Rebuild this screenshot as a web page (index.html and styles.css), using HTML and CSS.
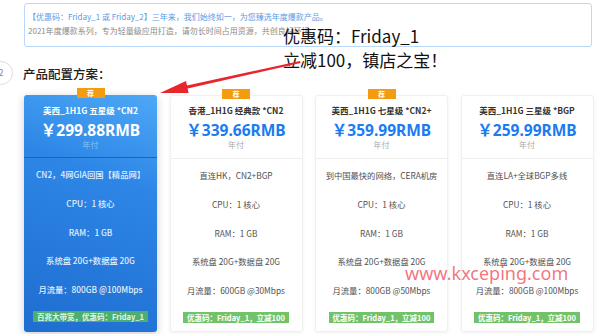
FILE: index.html
```html
<!DOCTYPE html>
<html lang="zh-CN">
<head>
    <meta charset="UTF-8">
    <meta name="viewport" content="width=device-width, initial-scale=1.0">
    <title>产品配置方案</title>
    <link rel="stylesheet" href="styles.css">
</head>
<body>
    <div class="page">
        <!-- Notice -->
        <div class="notice">
            <p class="notice-main">【优惠码：Friday_1 或 Friday_2】三年来，我们始终如一，为您臻选年度爆款产品。</p>
            <p class="notice-sub">2021年度爆款系列，专为轻量级应用打造，请勿长时间占用资源，共创良好环境。</p>
        </div>

        <!-- Step title -->
        <div class="step">
            <span class="step-num">2</span>
            <h2>产品配置方案：</h2>
        </div>

        <!-- Plans -->
        <div class="plans">
            <div class="plan featured">
                <span class="badge">荐</span>
                <div class="plan-head">
                    <h3>美西_1H1G 五星级 *CN2</h3>
                    <div class="price">￥299.88RMB</div>
                    <div class="period">年付</div>
                </div>
                <ul class="plan-body">
                    <li>CN2，4网GIA回国【精品网】</li>
                    <li>CPU：1 核心</li>
                    <li>RAM：1 GB</li>
                    <li>系统盘 20G+数据盘 20G</li>
                    <li>月流量：800GB @100Mbps</li>
                </ul>
                <div class="promo"><span>百兆大带宽，优惠码：Friday_1</span></div>
            </div>

            <div class="plan">
                <span class="badge">荐</span>
                <div class="plan-head">
                    <h3>香港_1H1G 经典款 *CN2</h3>
                    <div class="price">￥339.66RMB</div>
                    <div class="period">年付</div>
                </div>
                <ul class="plan-body">
                    <li>直连HK，CN2+BGP</li>
                    <li>CPU：1 核心</li>
                    <li>RAM：1 GB</li>
                    <li>系统盘 20G+数据盘 20G</li>
                    <li>月流量：600GB @30Mbps</li>
                </ul>
                <div class="promo"><span>优惠码：Friday_1，立减100</span></div>
            </div>

            <div class="plan">
                <span class="badge">荐</span>
                <div class="plan-head">
                    <h3>美西_1H1G 七星级 *CN2+</h3>
                    <div class="price">￥359.99RMB</div>
                    <div class="period">年付</div>
                </div>
                <ul class="plan-body">
                    <li>到中国最快的网络，CERA机房</li>
                    <li>CPU：1 核心</li>
                    <li>RAM：1 GB</li>
                    <li>系统盘 20G+数据盘 20G</li>
                    <li>月流量：800GB @50Mbps</li>
                </ul>
                <div class="promo"><span>优惠码：Friday_1，立减100</span></div>
            </div>

            <div class="plan">
                <div class="plan-head">
                    <h3>美西_1H1G 三星级 *BGP</h3>
                    <div class="price">￥259.99RMB</div>
                    <div class="period">年付</div>
                </div>
                <ul class="plan-body">
                    <li>直连LA+全球BGP多线</li>
                    <li>CPU：1 核心</li>
                    <li>RAM：1 GB</li>
                    <li>系统盘 20G+数据盘 20G</li>
                    <li>月流量：800GB @100Mbps</li>
                </ul>
                <div class="promo"><span>优惠码：Friday_1，立减100</span></div>
            </div>
        </div>

        <!-- Annotation drawn over the screenshot -->
        <div class="callout">优惠码：Friday_1<br>立减100，镇店之宝！</div>
        <svg class="arrow" width="150" height="40" viewBox="0 0 150 40">
            <path d="M2 35 L28 23.1 L29 27.5 L142 3 L142.5 5 L29.6 30.5 L30.6 34.9 Z" fill="#e8262b"/>
        </svg>
        <div class="watermark">www.kxceping.com</div>
    </div>
</body>
</html>
```

FILE: styles.css
```css
* {
    box-sizing: border-box;
}
body {
    margin: 0;
    padding: 0;
    background-color: #fff;
    font-family: "Noto Sans CJK SC", "Noto Sans", sans-serif;
    color: #333;
    overflow: hidden;
}
.page {
    position: relative;
    width: 600px;
    height: 334px;
    padding-top: 3px;
}
.notice {
    margin-left: 24px;
    width: 568px;
    height: 44px;
    border: 1px solid #b8d9fb;
    border-radius: 3px;
    padding: 6px 0 0 3px;
}
.notice p {
    margin: 0;
    font-size: 8px;
    line-height: 14px;
    white-space: nowrap;
}
.notice-main {
    color: #5a9ae6;
}
.notice-sub {
    color: #8a8a8a;
}
.step {
    display: flex;
    align-items: center;
    margin-top: 14px;
    height: 24px;
}
.step-num {
    width: 24px;
    height: 24px;
    margin-left: -11px;
    border: 1px solid #ddd;
    border-radius: 50%;
    font-size: 9px;
    color: #888;
    line-height: 22px;
    text-align: center;
}
.step h2 {
    margin: 0 0 0 10px;
    font-size: 12.5px;
    font-weight: 500;
    color: #222;
}
.plans {
    display: flex;
    gap: 12.5px;
    margin: 10px 0 0 24px;
}
.plan {
    position: relative;
    width: 133px;
    height: 237px;
    border: 1px solid #f0f0f0;
    border-radius: 3px;
    background: #fff;
    box-shadow: 0 1px 4px rgba(0, 0, 0, 0.06);
    text-align: center;
}
.plan.featured {
    border: none;
    background: linear-gradient(200deg, #4ea8f6 0%, #2d86e6 35%, #1f6dd1 100%);
    box-shadow: 0 2px 8px rgba(0, 0, 0, 0.2);
    color: #fff;
}
.badge {
    position: absolute;
    top: -7px;
    left: 50%;
    transform: translateX(-50%);
    width: 28px;
    height: 10px;
    background: #f39c12;
    color: #fff;
    font-size: 7px;
    font-weight: bold;
    line-height: 10px;
}
.plan-head {
    height: 63px;
    padding-top: 8px;
    border-bottom: 1px solid #eee;
}
.featured .plan-head {
    padding-top: 9px;
    border-bottom-color: #1a62c4;
}
.plan h3 {
    margin: 0;
    font-size: 8.5px;
    font-weight: bold;
    line-height: 12px;
    color: #333;
}
.featured h3 {
    color: #fff;
}
.price {
    margin-top: 5px;
    font-family: "Noto Sans", "Noto Sans CJK SC", sans-serif;
    font-size: 15.5px;
    font-weight: bold;
    line-height: 19px;
    color: #1a7cf0;
}
.featured .price {
    color: #fff;
}
.period {
    font-size: 8px;
    line-height: 10px;
    color: #aaa;
}
.featured .period {
    color: #8cc0f3;
}
.plan-body {
    list-style: none;
    margin: 0;
    padding: 10px 0 0;
}
.plan-body li {
    height: 28.75px;
    font-size: 8.3px;
    line-height: 12px;
    color: #4f4f4f;
}
.featured .plan-body li {
    color: #e2eefc;
    font-weight: 500;
}
.promo {
    display: flex;
    justify-content: center;
    margin-top: -1px;
}
.promo span {
    padding: 0 4px;
    background: #72c26a;
    color: #fff;
    font-size: 7.5px;
    font-weight: bold;
    line-height: 11px;
}
.featured .promo span {
    background: #4caf6f;
    color: #e6f4e8;
}
.callout {
    position: absolute;
    left: 283px;
    top: 24px;
    font-size: 17px;
    line-height: 24px;
    color: #111;
    white-space: nowrap;
}
.arrow {
    position: absolute;
    left: 158px;
    top: 58px;
}
.watermark {
    position: absolute;
    left: 405px;
    top: 262px;
    font-family: "Noto Sans", sans-serif;
    font-size: 18px;
    line-height: 22px;
    color: rgba(238, 72, 84, 0.75);
}
```
